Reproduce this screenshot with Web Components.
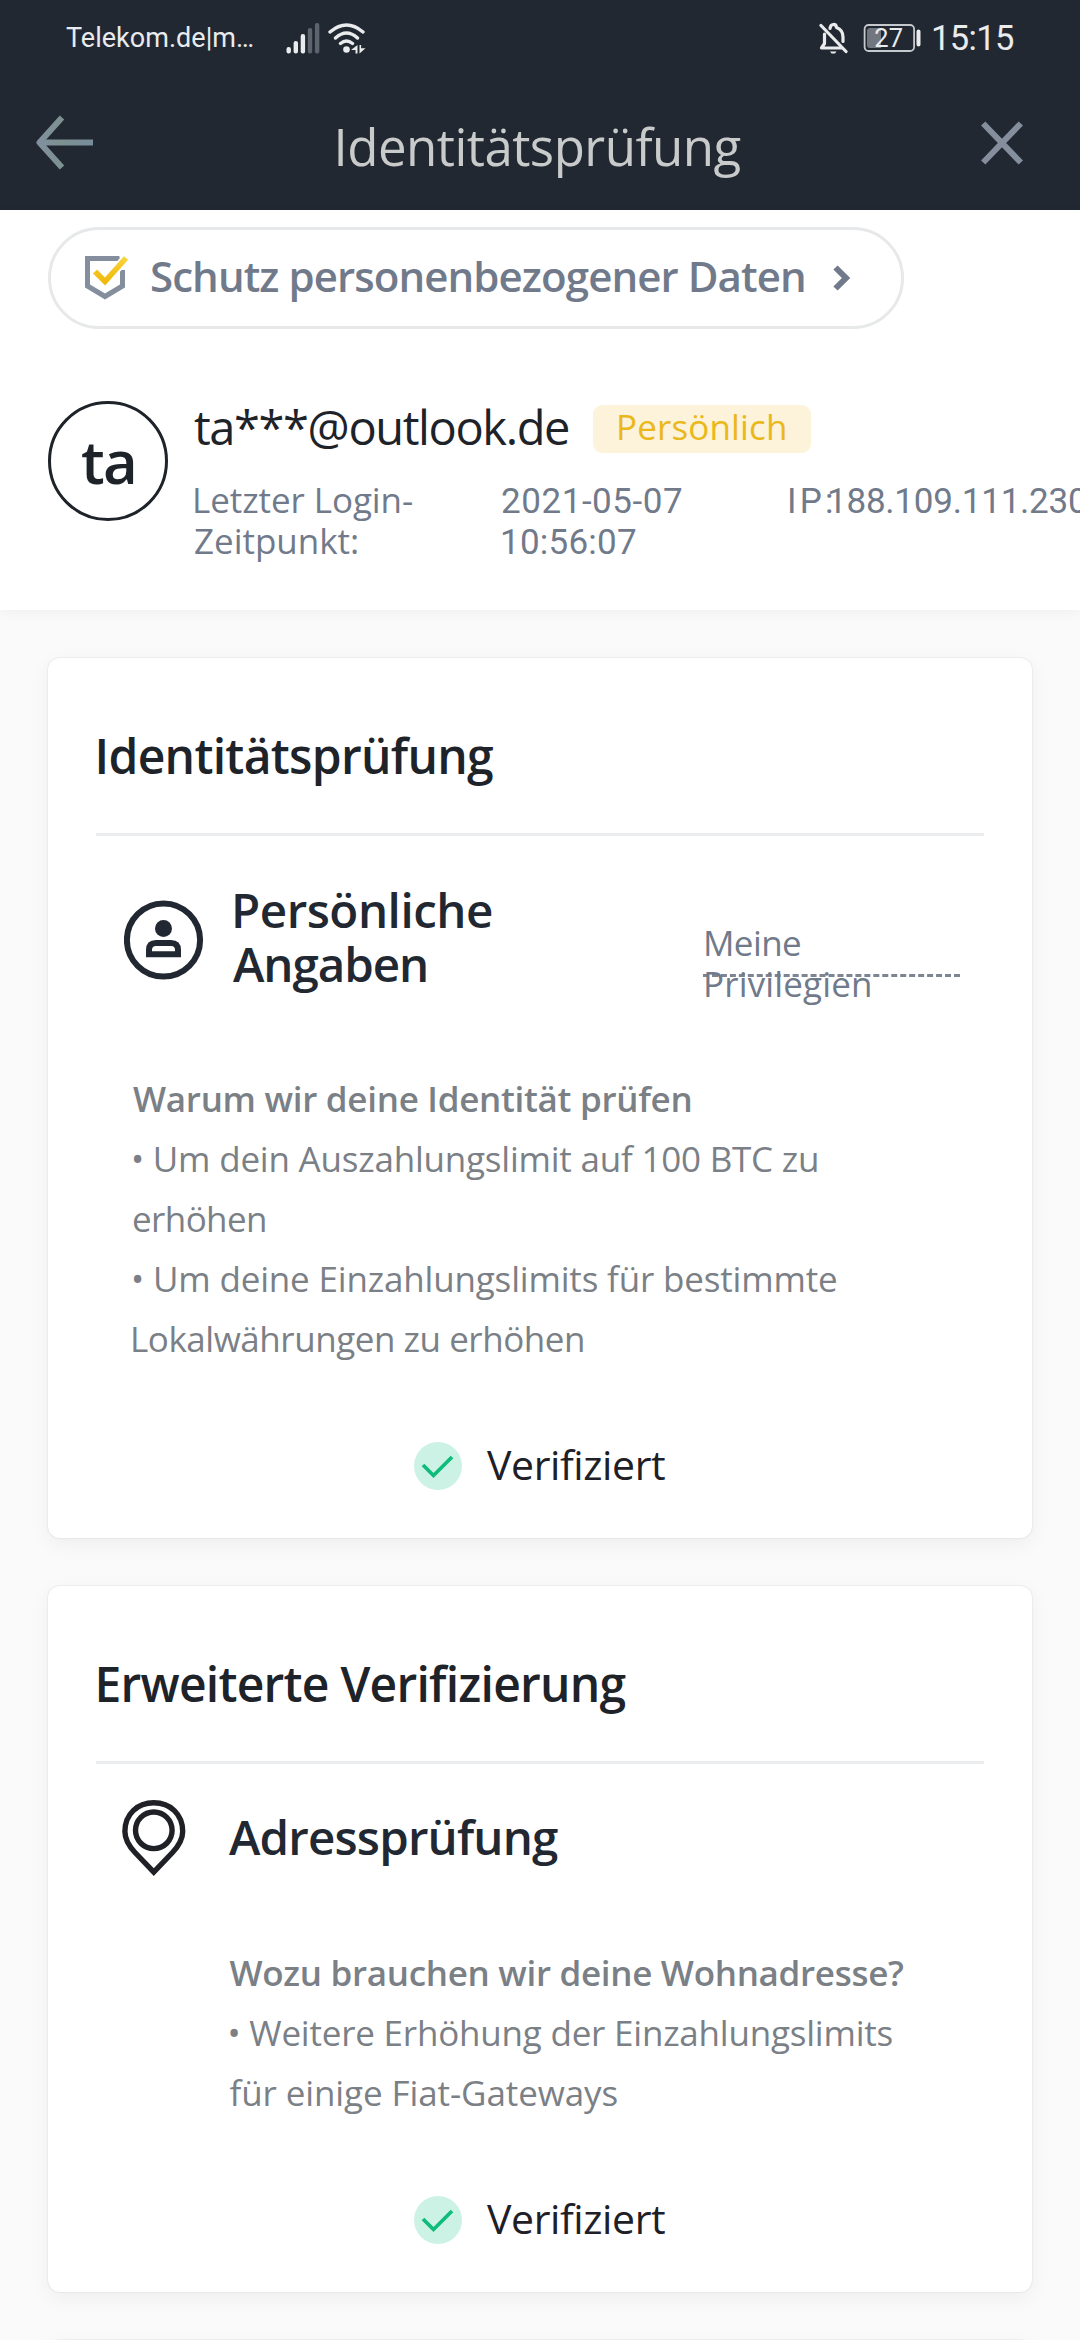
<!DOCTYPE html>
<html lang="de">
<head>
<meta charset="utf-8">
<title>Identitätsprüfung</title>
<style>
html,body{margin:0;padding:0}
body{width:1080px;height:2340px;overflow:hidden;background:#fafafa;font-family:"Open Sans",Roboto,sans-serif}
</style>
</head>
<body>
<verify-page></verify-page>
<script>
const define = (name, html, ready) => customElements.define(name, class extends HTMLElement {
  constructor() { super(); this.attachShadow({ mode: 'open' }).innerHTML = html; }
  connectedCallback() { if (ready) ready.call(this, this.shadowRoot); }
});

/* One line of text tracked so that its ink spans exactly "w" pixels.
   The "ui" attribute selects the narrower system face used for digits. */
const ctx = document.createElement('canvas').getContext('2d');
define('fit-text', `<style>:host{display:block;white-space:nowrap;flex:none}</style><slot></slot>`, function () {
  const a = n => this.getAttribute(n);
  const size = +a('size'), weight = a('weight') || 400, w = +a('w'), text = this.textContent;
  const ui = this.hasAttribute('ui');
  const family = ui ? 'Roboto, sans-serif' : '"Open Sans", Roboto, sans-serif';
  ctx.font = `${weight} ${size}px ${family}`;
  const m = ctx.measureText(text);
  const ink = m.actualBoundingBoxLeft + m.actualBoundingBoxRight;
  const s = this.style;
  s.fontFamily = family;
  s.fontSize = size + 'px';
  s.fontWeight = weight;
  s.lineHeight = a('lh') + 'px';
  s.width = w + 'px';
  s.letterSpacing = ((w - ink) / (text.length - 1)).toFixed(3) + 'px';
  s.textIndent = m.actualBoundingBoxLeft.toFixed(2) + 'px';
  if (!ui) s.transform = 'translateY(-' + Math.round(size * .043) + 'px)';
});

define('status-bar', `<style>
:host{display:flex;align-items:center;height:76px;padding:0 66px;box-sizing:border-box;color:#e9ebed}
.grow{flex:1}svg{display:block;flex:none}
.sig{margin:0 8px 0 33px}.bell{margin-right:15px}.bat{margin-right:11px}
</style>
<fit-text ui size="27" w="187" lh="40">Telekom.de|m…</fit-text>
<svg class="sig" width="34" height="32" viewBox="0 0 34 32"><g fill="#e9ebed"><rect y="25" x=".5" width="4.4" height="6.5" rx="2"/><rect x="7.6" y="19" width="4.4" height="12.5" rx="2"/><rect x="14.7" y="12" width="4.4" height="19.5" rx="2"/></g><g fill="#5e646d"><rect x="21.8" y="6" width="4.4" height="25.5" rx="2"/><rect x="28.9" y="1" width="4.4" height="30.5" rx="2"/></g></svg>
<svg width="38" height="32" viewBox="0 0 38 32"><g fill="none" stroke="#e9ebed" stroke-width="3.4" stroke-linecap="round"><path d="M2 10Q18.500-4 35 10M7.500 16Q18.500 6 29.500 16M12.500 21.500Q18.500 16.500 24.500 21.500"/></g><circle cx="18.500" cy="27.500" r="3.300" fill="#e9ebed"/><path d="M29.500 23v8.500h-2v-3.500h-4.500zM31.500 31.500V23h1.600v3.200h4.400z" fill="#e9ebed"/></svg>
<span class="grow"></span>
<svg class="bell" width="29" height="32" viewBox="0 0 29 32" fill="none" stroke="#e9ebed"><path d="M11 6.500C11.500 1.300 17 1.300 17.500 5.500C22 7.200 24 11 24 15V19.500M5.500 12V21.500L2.500 26H22.500" stroke-width="3.200" stroke-linejoin="round" stroke-linecap="round"/><path d="M2 3.500L27 29.500" stroke-width="3.200" stroke-linecap="round"/><path d="M11 29.500h6.500l-1.500 2h-3.500z" fill="#e9ebed" stroke="none"/></svg>
<svg class="bat" width="59" height="30" viewBox="0 0 59 30"><rect x="1.600" y="2" width="49.500" height="26" rx="4" fill="none" stroke="#c5c8cc" stroke-width="1.800"/><path d="M7 5h11v20H7a3 3 0 0 1-3-3V8a3 3 0 0 1 3-3z" fill="#72777f"/><rect x="53.500" y="6.500" width="4" height="17" rx="2" fill="#e9ebed"/><text x="11.300" y="23.600" font-size="25.500" fill="#e9ebed" font-family="Roboto">27</text></svg>
<fit-text ui size="34.500" w="81" lh="40">15:15</fit-text>`);

define('nav-bar', `<style>
:host{display:flex;align-items:center;justify-content:space-between;height:134px;padding:0 57px 0 36px;box-sizing:border-box;color:#c9caca}
svg{display:block}::slotted(fit-text){padding-top:9px;margin-left:4px}
</style>
<svg width="57" height="56" viewBox="0 0 57 56" fill="none" stroke-width="6"><defs><linearGradient id="g" gradientUnits="userSpaceOnUse" x1="0" y1="0" x2="57" y2="0"><stop offset="0" stop-color="#8290a0"/><stop offset=".45" stop-color="#7c9190"/><stop offset="1" stop-color="#788b9b"/></linearGradient></defs><path d="M26 2.500L3.500 27.500L26 52.500" stroke="url(#g)" stroke-linejoin="round"/><path d="M3 24.500H57V30.500H3z" fill="url(#g)"/></svg>
<slot></slot>
<svg width="42" height="44" viewBox="0 0 42 44" fill="none" stroke="#848e9c" stroke-width="6"><path d="M2.200 2.500L39.800 41.500M39.800 2.500L2.200 41.500"/></svg>`);

define('privacy-pill', `<style>
:host{display:flex;align-items:center;width:856px;height:102px;border:3px solid #e6e8e9;border-radius:51px;box-sizing:border-box;padding-left:34px;color:#717a8a}
svg{display:block;flex:none}fit-text{margin:0 29px 0 22px}
</style>
<svg width="45" height="46" viewBox="0 0 45 46"><path d="M35 3.500H2.500V31L20 41.500L37.500 31V15" fill="none" stroke="#848e9c" stroke-width="5"/><path d="M34 0H45V12H37z" fill="#fff"/><path d="M10 16.500L20 27L41 3" fill="none" stroke="#fff" stroke-width="9"/><path d="M10 16.500L20 26.500L41 3" fill="none" stroke="url(#y)" stroke-width="5.600"/><defs><linearGradient id="y" x1="0" y1="1" x2="0" y2="0"><stop stop-color="#f0b90b"/><stop offset="1" stop-color="#f8d33a"/></linearGradient></defs></svg>
<fit-text size="42" weight="600" w="652" lh="60">Schutz personenbezogener Daten</fit-text>
<svg width="18" height="28" viewBox="0 0 18 28"><path d="M2.500 3.500L13 14L2.500 24.500" fill="none" stroke="#717a8a" stroke-width="6"/></svg>`);

define('user-profile', `<style>
:host{display:flex;flex-direction:column;gap:72px;height:400px;box-sizing:border-box;padding:17px 48px 0;background:#fff;overflow:visible;box-shadow:0 3px 12px rgba(0,0,0,.045)}
.row{display:flex;gap:26px}
.avatar{display:flex;align-items:center;justify-content:center;width:120px;height:120px;padding-top:5px;box-sizing:border-box;border:3px solid #1e2329;border-radius:50%;flex:none;color:#1e2329}
.info{padding-top:4px;min-width:0;flex:1}
.id{display:flex;align-items:center;height:48px;gap:25px;color:#1e2329}
.badge{display:flex;align-items:center;justify-content:center;width:218px;height:48px;border-radius:9px;background:#fcf3da;color:#eab81b}
.meta{display:flex;padding:28px 0 0 1px;color:#717a8a}
.meta>div{flex:none}.a{width:307px}.b{width:288px}.c{width:39px}
</style>
<privacy-pill></privacy-pill>
<div class="row"><div class="avatar"><fit-text size="60" weight="600" w="52" lh="70">ta</fit-text></div>
<div class="info"><div class="id"><fit-text size="47" w="374" lh="48">ta***@outlook.de</fit-text><div class="badge"><fit-text size="35" w="166" lh="48">Persönlich</fit-text></div></div>
<div class="meta"><div class="a"><fit-text size="35" w="217" lh="41">Letzter Login-</fit-text><fit-text size="35" w="162" lh="41">Zeitpunkt:</fit-text></div>
<div class="b"><fit-text ui size="35" w="180" lh="41">2021-05-07</fit-text><fit-text ui size="35" w="134" lh="41">10:56:07</fit-text></div>
<div class="c"><fit-text ui size="35" w="42" lh="41">IP:</fit-text></div>
<div><fit-text ui size="35" w="257" lh="41">188.109.111.230</fit-text></div></div></div></div>`);

define('verify-card', `<style>
:host{display:block;margin:0 48px;padding:75px 48px 48px;border-radius:12px;background:#fff;box-sizing:border-box;box-shadow:0 0 2px rgba(0,0,0,.14),0 6px 20px rgba(0,0,0,.05)}
.title{color:#1e2329;padding:0 0 50px 2.500px;border-bottom:3px solid #eaecee}
</style><div class="title"><slot name="title"></slot></div><slot></slot>`);

define('verified-mark', `<style>
:host{display:flex;align-items:center;gap:25px;height:48px;margin:71px 0 0 318px;color:#1e2026}svg{display:block}
</style><svg width="48" height="48" viewBox="0 0 48 48"><circle cx="24" cy="24" r="24" fill="#ccf2e6"/><path d="M9 23L19.500 33.500L38 15" fill="none" stroke="#0fbc7b" stroke-width="3.700"/></svg><fit-text size="41" w="178" lh="50">Verifiziert</fit-text>`);

define('person-icon', `<style>:host{display:block;flex:none}svg{display:block}</style>
<svg width="80" height="80" viewBox="0 0 80 80" fill="none" stroke="#222832" stroke-width="6"><circle cx="39.500" cy="40" r="36.600"/><circle cx="39.500" cy="28.500" r="8.500" fill="#222832" stroke="none"/><path d="M25 54.300V50Q25 43 32 43H47Q54 43 54 50V54.300z"/></svg>`);

define('pin-icon', `<style>:host{display:block;flex:none}svg{display:block}</style>
<svg width="64" height="77" viewBox="0 0 64 77" fill="none" stroke="#202126" stroke-width="5.400"><path d="M31.800 72.200L13 52.500C6 45 2.900 38.500 2.900 31.500C2.900 14 15.500 2.800 31.800 2.800S60.700 14 60.700 31.500C60.700 38.500 57.500 45 50.500 52.500z"/><circle cx="31.800" cy="30.300" r="18.300"/></svg>`);

define('privilege-link', `<style>:host{display:block;width:257px;height:53px;box-sizing:border-box;padding-left:3px;margin-top:39.500px;border-bottom:3px dashed #7d8592;color:#717a8a;align-self:flex-start}</style>
<fit-text size="35" w="94" lh="41">Meine</fit-text><fit-text size="35" w="164" lh="41">Privilegien</fit-text>`);

define('verify-page', `<style>
:host{display:flex;flex-direction:column;height:2340px;overflow:hidden;background:#fafafa}
header{background:#212832;flex:none}user-profile{flex:none}
main{display:flex;flex-direction:column;gap:48px;padding-top:48px}verify-card{flex:none}
.head{display:flex;color:#222832}
.one{padding:48.500px 0 0 28px}.one person-icon{margin:15.500px 29px 0 0}.one .name{width:470px}
.two{align-items:center;padding:37px 0 0 25.500px;height:76px}.two .name{margin-left:43.500px}
.text{color:#7b7f86}
.t1{margin:78px 0 0 37px}.t2{margin:68px 0 0 133.500px}
</style>
<header><status-bar></status-bar><nav-bar><fit-text size="51" w="403" lh="60">Identitätsprüfung</fit-text></nav-bar></header>
<user-profile></user-profile>
<main>
<verify-card><fit-text slot="title" size="48" weight="600" w="394.500" lh="50">Identitätsprüfung</fit-text>
<div class="head one"><person-icon></person-icon><div class="name"><fit-text size="47.500" weight="600" w="257" lh="54" style="margin-left:2px">Persönliche</fit-text><fit-text size="47.500" weight="600" w="193" lh="54">Angaben</fit-text></div><privilege-link></privilege-link></div>
<div class="text t1"><fit-text size="35" weight="600" w="557.500" lh="60">Warum wir deine Identität prüfen</fit-text><fit-text size="35" w="684" lh="60">• Um dein Auszahlungslimit auf 100 BTC zu</fit-text><fit-text size="35" w="132" lh="60">erhöhen</fit-text><fit-text size="35" w="703" lh="60">• Um deine Einzahlungslimits für bestimmte</fit-text><fit-text size="35" w="450" lh="60">Lokalwährungen zu erhöhen</fit-text></div>
<verified-mark></verified-mark></verify-card>
<verify-card><fit-text slot="title" size="48" weight="600" w="527" lh="50">Erweiterte Verifizierung</fit-text>
<div class="head two"><pin-icon></pin-icon><fit-text class="name" size="47.500" weight="600" w="329" lh="54">Adressprüfung</fit-text></div>
<div class="text t2"><fit-text size="35" weight="600" w="673.500" lh="60">Wozu brauchen wir deine Wohnadresse?</fit-text><fit-text size="35" w="663" lh="60">• Weitere Erhöhung der Einzahlungslimits</fit-text><fit-text size="35" w="388" lh="60">für einige Fiat-Gateways</fit-text></div>
<verified-mark></verified-mark></verify-card>
<verify-card></verify-card>
</main>`);
</script>
</body>
</html>
